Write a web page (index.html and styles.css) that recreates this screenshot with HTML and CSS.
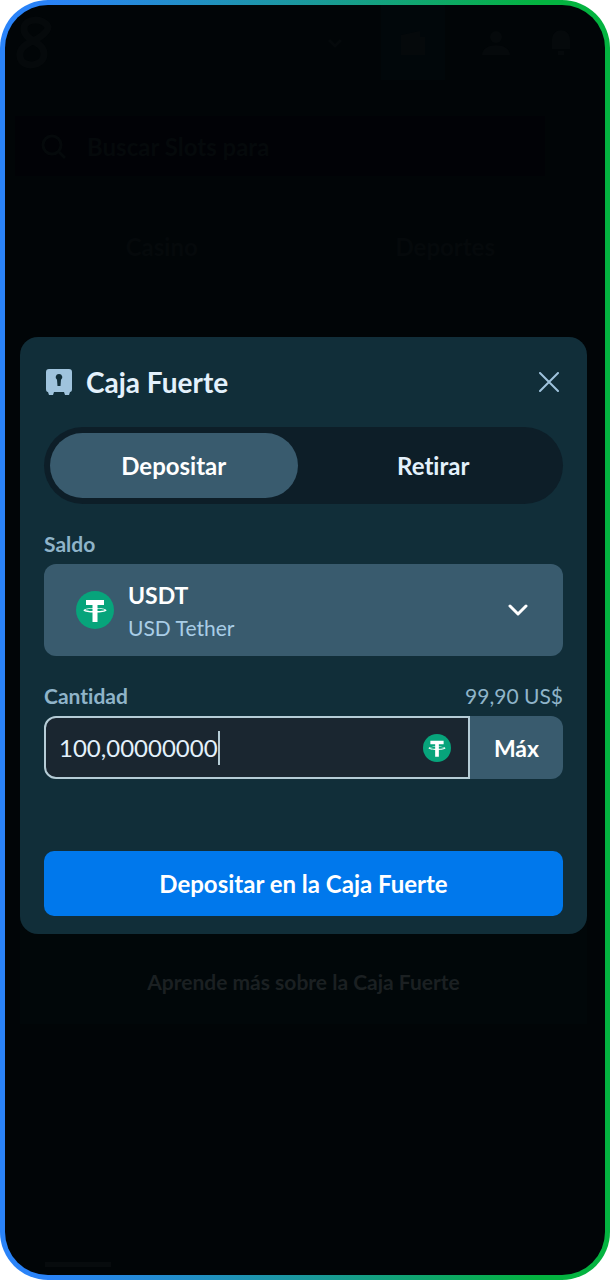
FILE: index.html
```html
<!DOCTYPE html>
<html lang="es">
  <head>
    <meta charset="utf-8">
    <meta name="viewport" content="width=device-width, initial-scale=1">
    <title>Caja Fuerte</title>
    <link rel="stylesheet" href="styles.css">
  </head>
  <body>
    <svg width="0" height="0" class="sprite" aria-hidden="true">
      <symbol id="tether" viewBox="0 0 38 38">
        <circle cx="19" cy="19" r="19" fill="#07a47b"/>
        <path fill="#fff" d="M10 9h18v5h-6.500v3c5 .3 9 1.200 9 2.300s-4 2-9 2.300V31h-5v-9.400c-5-.3-9-1.200-9-2.300s4-2 9-2.300v-3H10z"/>
        <path fill="#07a47b" d="M16.500 17.800v2.300c-3.500-.1-7-.5-7-1.100s3-1.100 7-1.200zM21.500 17.800v2.300c3.500-.1 7-.5 7-1.100s-3-1.100-7-1.200z"/>
      </symbol>
    </svg>

    <div class="device">
      <div class="screen">

        <!-- page behind the dimmed overlay -->
        <div class="page" aria-hidden="true">
          <div class="topbar">
            <svg class="logo" width="38" height="60" viewBox="0 0 38 60"><path d="M33 14C30 5 9 4 9 16s20 12 20 25-22 15-24 3 13-15 20-20 8-8 8-10z"/></svg>
            <div class="topbar-icons">
              <svg width="20" height="20" viewBox="0 0 20 20"><path d="M4 7l6 6 6-6"/></svg>
              <div class="wallet"><svg width="30" height="30" viewBox="0 0 30 30"><path class="solid" d="M3 7l19-4v6h5v18H3z"/></svg></div>
              <svg width="30" height="30" viewBox="0 0 30 30"><circle class="solid" cx="15" cy="9" r="6"/><path class="solid" d="M1 27c0-13 28-13 28 0z"/></svg>
              <svg width="30" height="30" viewBox="0 0 30 30"><path class="solid" d="M5 21V12c0-13 18-13 18 0v9zM11 23h6v4h-6z"/></svg>
            </div>
          </div>
          <div class="search">
            <svg width="28" height="28" viewBox="0 0 28 28"><circle cx="13" cy="13" r="9"/><path d="M20 20l6 6"/></svg>
            <span>Buscar Slots para</span>
          </div>
          <div class="page-tabs">
            <span>Casino</span>
            <span>Deportes</span>
          </div>
          <div class="home-bar"></div>
        </div>

        <div class="overlay">
          <div class="dialog" role="dialog" aria-labelledby="vault-title">
            <form class="vault">
              <div class="vault-header">
                <svg width="26" height="26" viewBox="0 0 26 26"><path fill="#9fc3dd" d="M3 0h20q3 0 3 3v17q0 3-2 3l-1 3h-4l-1-3H8l-1 3H3l-1-3q-2 0-2-3V3q0-3 3-3z"/><path fill="#112e39" d="M13 5a3.200 3.200 0 0 1 2 5.800l-.5 6.200h-3l-.5-6.200A3.200 3.200 0 0 1 13 5z"/></svg>
                <h1 id="vault-title">Caja Fuerte</h1>
                <button type="button" class="close" aria-label="Cerrar">
                  <svg width="20" height="20" viewBox="0 0 20 20"><path d="M1 1l18 18M19 1L1 19"/></svg>
                </button>
              </div>

              <div class="tabs">
                <button type="button" class="tab active">Depositar</button>
                <button type="button" class="tab">Retirar</button>
              </div>

              <div class="field-label">
                <label for="currency">Saldo</label>
              </div>
              <div class="currency">
                <select id="currency">
                  <option>USDT</option>
                </select>
                <div class="currency-info">
                  <svg width="38" height="38"><use href="#tether"/></svg>
                  <span class="currency-name">USD Tether</span>
                  <svg class="chevron" width="20" height="12" viewBox="0 0 20 12"><path d="M2 2l8 8 8-8"/></svg>
                </div>
              </div>

              <div class="field-label">
                <label for="amount">Cantidad</label>
                <span>99,90 US$</span>
              </div>
              <div class="amount">
                <div class="amount-box">
                  <input type="text" id="amount" inputmode="decimal" value="100,00000000">
                  <span class="caret"></span>
                  <svg width="28" height="28"><use href="#tether"/></svg>
                </div>
                <button type="button" class="max">Máx</button>
              </div>

              <button type="submit" class="submit">Depositar en la Caja Fuerte</button>
            </form>
            <a class="learn" href="#">Aprende más sobre la Caja Fuerte</a>
          </div>
        </div>

      </div>
    </div>
  </body>
</html>
```

FILE: styles.css
```css
* {
  box-sizing: border-box;
}

body {
  margin: 0;
  background: #fff;
  color: #fff;
  font-family: Lato, "Liberation Sans", sans-serif;
  font-variant-ligatures: none;
}

button,
input,
select {
  font-family: inherit;
  font-variant-ligatures: none;
  border: none;
  margin: 0;
  padding: 0;
}

button {
  cursor: pointer;
}

.sprite {
  position: absolute;
}

/* gradient frame */
.device {
  display: flex;
  min-height: 100vh;
  padding: 5px;
  border-radius: 48px;
  background: linear-gradient(90deg, #2a83f8 8%, #1a9a98 52%, #04b340 88%);
}

.screen {
  position: relative;
  flex: 1;
  display: flex;
  border-radius: 43px;
  background: #010507;
  overflow: hidden;
}

/* dimmed page */
.page {
  flex: 1;
  display: flex;
  flex-direction: column;
  color: #05090b;
  font-size: 24px;
  font-weight: bold;
}

.page svg {
  fill: none;
  stroke: #05090b;
  stroke-width: 3;
}

.page .solid {
  fill: #05090b;
  stroke: none;
}

.page .logo {
  stroke-width: 7;
}

.topbar {
  display: flex;
  align-items: center;
  justify-content: space-between;
  height: 75px;
  padding: 0 28px 0 10px;
}

.topbar-icons {
  display: flex;
  align-items: center;
  gap: 36px;
}

.wallet {
  display: flex;
  align-items: center;
  justify-content: center;
  width: 64px;
  height: 75px;
  background: #01070a;
}

.search {
  display: flex;
  align-items: center;
  gap: 20px;
  height: 60px;
  margin: 36px 60px 0 10px;
  padding: 0 24px;
  background: #010206;
}

.page-tabs {
  display: flex;
  margin: 56px 18px 0 15px;
  text-align: center;
}

.page-tabs span {
  flex: 1;
}

.home-bar {
  width: 66px;
  height: 5px;
  margin: auto auto 8px 40px;
  background: #070b0d;
}

.overlay {
  position: absolute;
  inset: 0;
  padding: 332px 18px 0 15px;
}

.dialog {
  border-radius: 18px 18px 0 0;
  background: #010709;
}

.vault {
  padding: 0 24px 18px;
  border-radius: 18px;
  background: #112e39;
}

.vault-header {
  display: flex;
  align-items: center;
  gap: 14px;
  height: 90px;
  padding: 0 4px 0 2px;
}

.vault-header h1 {
  flex: 1;
  margin: 0;
  color: #e3f1fc;
  font-size: 28px;
  line-height: 32px;
}

.close {
  display: flex;
  background: none;
}

.close svg {
  fill: none;
  stroke: #9fc3dd;
  stroke-width: 2;
  stroke-linecap: round;
}

.tabs {
  display: grid;
  grid-template-columns: 1fr 1fr;
  gap: 12px;
  padding: 6px;
  border-radius: 39px;
  background: #0d1e28;
}

.tab {
  height: 65px;
  border-radius: 33px;
  background: none;
  color: #e3f1fc;
  font-size: 24px;
  font-weight: bold;
}

.tab.active {
  background: #395b6e;
  color: #fff;
}

.field-label {
  display: flex;
  justify-content: space-between;
  margin: 28px 0 8px;
  color: #8fb4c9;
  font-size: 21px;
  line-height: 24px;
}

.field-label label {
  font-weight: bold;
}

/* the select fills the box, the details lie on the same grid cell */
.currency {
  display: grid;
}

.currency select,
.currency-info {
  grid-area: 1 / 1;
}

.currency select {
  height: 92px;
  padding: 0 60px 30px 84px;
  border-radius: 12px;
  appearance: none;
  background: #395b6e;
  color: #fff;
  font-size: 23px;
  font-weight: bold;
}

.currency-info {
  display: flex;
  align-items: center;
  gap: 14px;
  padding: 0 35px 0 32px;
  pointer-events: none;
}

.currency-name {
  flex: 1;
  padding-top: 36px;
  color: #a9cde6;
  font-size: 21px;
  line-height: 24px;
}

.chevron {
  fill: none;
  stroke: #fff;
  stroke-width: 3;
  stroke-linecap: round;
  stroke-linejoin: round;
}

.amount {
  display: flex;
  height: 63px;
  margin-bottom: 72px;
}

.amount-box {
  flex: 1;
  display: flex;
  align-items: center;
  padding: 0 17px 0 13px;
  border: 2px solid #b5ccd6;
  border-radius: 12px 0 0 12px;
  background: #1a2630;
}

.amount-box input {
  field-sizing: content;
  background: none;
  color: #e3f1fc;
  font-size: 24px;
  outline: none;
}

.amount-box svg {
  margin-left: auto;
}

.caret {
  width: 2px;
  height: 34px;
  background: #b5ccd6;
}

.max {
  width: 93px;
  border-radius: 0 12px 12px 0;
  background: #395b6e;
  color: #fff;
  font-size: 23px;
  font-weight: bold;
}

.submit {
  width: 100%;
  height: 65px;
  border-radius: 10px;
  background: #0078ec;
  color: #fff;
  font-size: 24px;
  font-weight: bold;
}

.learn {
  display: block;
  padding: 36px 20px 30px;
  color: #1b2022;
  font-size: 21px;
  font-weight: bold;
  line-height: 24px;
  text-align: center;
  text-decoration: none;
}
```
